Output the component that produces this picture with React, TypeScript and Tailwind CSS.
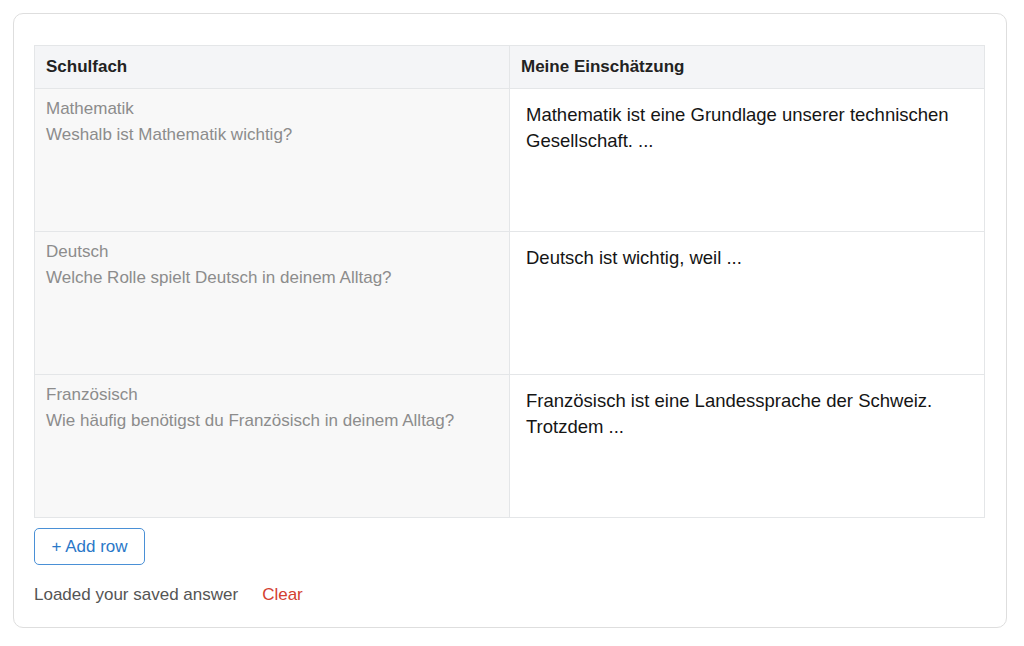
const rows = [
  {
    subject: "Mathematik",
    question: "Weshalb ist Mathematik wichtig?",
    answer: "Mathematik ist eine Grundlage unserer technischen Gesellschaft. ...",
  },
  {
    subject: "Deutsch",
    question: "Welche Rolle spielt Deutsch in deinem Alltag?",
    answer: "Deutsch ist wichtig, weil ...",
  },
  {
    subject: "Französisch",
    question: "Wie häufig benötigst du Französisch in deinem Alltag?",
    answer: "Französisch ist eine Landessprache der Schweiz. Trotzdem ...",
  },
];

export default function App() {
  return (
    <div className="min-h-[646px] bg-white p-[13px] font-['Liberation_Sans',Arial,sans-serif]">
      <div className="h-[615px] w-[994px] rounded-[10px] border border-[#dedede] bg-white pt-[31px] pl-5 pr-[21px]">
        <table className="w-full table-fixed border-collapse border border-[#e4e6e8]">
          <thead>
            <tr className="bg-[#f4f5f7]">
              <th className="h-[43px] w-1/2 border border-[#e4e6e8] pl-[11px] pr-3 text-left text-[17px] font-bold text-[#222]">
                Schulfach
              </th>
              <th className="h-[43px] w-1/2 border border-[#e4e6e8] pl-[11px] pr-3 text-left text-[17px] font-bold text-[#222]">
                Meine Einschätzung
              </th>
            </tr>
          </thead>
          <tbody>
            {rows.map((r) => (
              <tr key={r.subject}>
                <td className="h-[143px] border border-[#e4e6e8] bg-[#f8f8f8] pl-[11px] pr-3 pt-[7px] align-top text-[17px] leading-[26px] text-[#8c8c8c]">
                  <div>{r.subject}</div>
                  <div>{r.question}</div>
                </td>
                <td className="h-[143px] border border-[#e4e6e8] p-0 align-top">
                  <textarea
                    defaultValue={r.answer}
                    className="block h-[142px] w-full resize-none bg-transparent pl-4 pr-4 pt-[13px] text-[18.5px] leading-[26px] text-[#151515] outline-none"
                  />
                </td>
              </tr>
            ))}
          </tbody>
        </table>
        <button className="mt-[10px] h-[37px] w-[111px] rounded-[5px] border border-[#4a90d6] text-[17px] text-[#2a78c8]">
          + Add row
        </button>
        <div className="mt-[17px] flex items-center gap-6 text-[17px] leading-[26px]">
          <span className="text-[#555]">Loaded your saved answer</span>
          <span className="text-[#d3402f]">Clear</span>
        </div>
      </div>
    </div>
  );
}
